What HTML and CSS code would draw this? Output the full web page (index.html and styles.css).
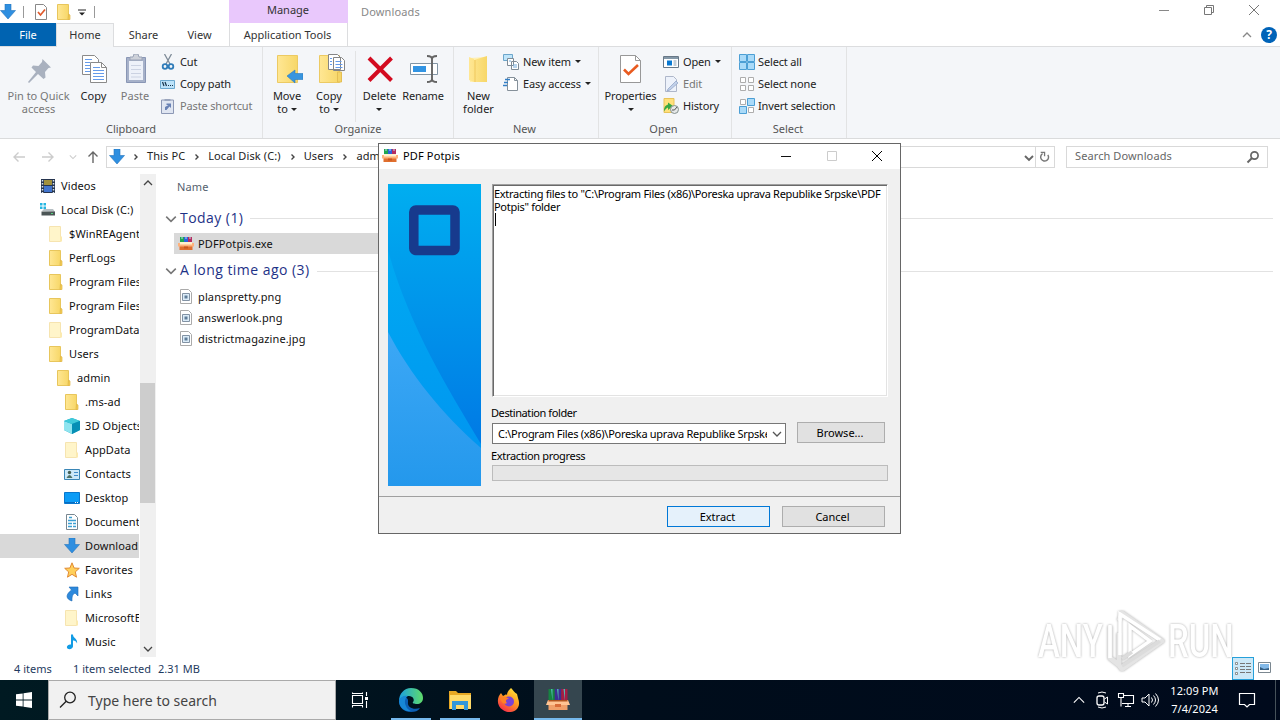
FILE: index.html
```html
<!DOCTYPE html>
<html lang="en">
<head>
  <meta charset="utf-8">
  <title>Downloads</title>
  <link rel="stylesheet" href="styles.css">
</head>
<body>

<svg class="sprites">
  <defs>
    <linearGradient id="gold" x1="0" x2="1"><stop offset="0" stop-color="#ffe794"/><stop offset="1" stop-color="#f7d768"/></linearGradient>
    <linearGradient id="cool" x1="0" y1="0" x2="0" y2="1"><stop offset="0" stop-color="#00aef0"/><stop offset="1" stop-color="#0071e3"/></linearGradient>
    <linearGradient id="cool2" x1="0" y1="0" x2="0" y2="1"><stop offset="0" stop-color="#00aaf2"/><stop offset="1" stop-color="#0092f0"/></linearGradient>
    <linearGradient id="cool3" x1="0" y1="0" x2="0" y2="1"><stop offset="0" stop-color="#3ca8f6"/><stop offset="1" stop-color="#2498ec"/></linearGradient>
    <linearGradient id="edge" x1="0" x2="1"><stop offset="0" stop-color="#1a9fe0"/><stop offset="1" stop-color="#5fdc6a"/></linearGradient>
    <linearGradient id="fire" x1="0.8" y1="0" x2="0.2" y2="1"><stop offset="0" stop-color="#ffe83e"/><stop offset=".45" stop-color="#ff9a1f"/><stop offset="1" stop-color="#f5234f"/></linearGradient>
  </defs>
  <symbol id="down" viewBox="0 0 16 16"><path d="M5 0h6v6.500h4.500L8 15 .5 6.500H5z" fill="#2f8fe0" stroke="#2676bd" stroke-width=".6"/></symbol>
  <symbol id="folder" viewBox="0 0 16 16"><path d="M1.500.5h11v15h-11z" fill="url(#gold)" stroke="#e8c65c"/><path d="M12.500 10l1.500 1v4.500h-2z" fill="#f4cf55" stroke="#e0b548" stroke-width=".7"/></symbol>
  <symbol id="faded" viewBox="0 0 16 16"><path d="M1.500.5h11v15h-11z" fill="#fff5ca" stroke="#f6e4b0"/><path d="M12 10.500h2v5h-2z" fill="#fbeab0"/></symbol>
  <symbol id="check" viewBox="0 0 16 16"><path d="M2.500.5h8l3 3v12h-11z" fill="#fff" stroke="#888"/><path d="M5 8l2.500 3L12 5.500" fill="none" stroke="#e0592b" stroke-width="1.700"/></symbol>
  <symbol id="box" viewBox="0 0 16 16"><path d="M2 1h4v7H2z" fill="#20a650"/><path d="M6 1h4v7H6z" fill="#2d62dc"/><path d="M10 1h4v7h-4z" fill="#b52c60"/><path d="M3 2h2M7 2h2M11 2h2" stroke="#bde"/><path d="M1.500 8h13v6h-13z" fill="#e06f2e"/><path d="M0 7h16v3.500H0z" fill="#ffb27b"/><path d="M2 6h12v2.500H2z" fill="#fff0cc"/><path d="M6 10.500h4v2H6z" fill="#c95820"/></symbol>
  <symbol id="carton" viewBox="0 0 24 24"><path d="M2.500 1h6.300v12H2.500z" fill="#168341"/><path d="M8.800 1h6.400v12H8.800z" fill="#3d2d93"/><path d="M15.200 1h6.300v12h-6.300z" fill="#a51d45"/><path d="M5 1h1.500v12M11 1h1.500v12M17.500 1H19v12" fill="#52b8b0"/><path d="M2.500 14h19v8h-19z" fill="#f0a06a"/><path d="M2 12h20l2 5H0z" fill="#ffc493"/><path d="M2.500 12h19v1.500h-19z" fill="#b0541f"/><path d="M9 16h6v3H9z" fill="#d86c39"/></symbol>
  <symbol id="image" viewBox="0 0 16 16"><path d="M2.500.5h8l3 3v11h-11z" fill="#fff" stroke="#aaa"/><path d="M4.500 4.500h7v7h-7z" fill="#dcecf8" stroke="#8292a4"/><path d="M6.500 6.500h3v3h-3z" fill="#5f7d99"/></symbol>
  <symbol id="pin" viewBox="0 0 32 32"><path d="M19.500 5L28 13.500l-2.500.5-3.500 4 .5 5.500-2 1.500-5.500-5L6 29l-1-1L13 18 8.500 13.500l1.500-2 5.500.5 3.500-4z" fill="#a9b1bf"/></symbol>
  <symbol id="copy" viewBox="0 0 32 32"><g fill="#fff" stroke="#8a8a8a"><path d="M4.500 1.500h12l4 4v15h-16z"/><path d="M12.500 8.500h11l5 5v15h-16z"/><path d="M23.500 8.500v5h5" fill="none"/></g><path d="M7 5.500h7M7 8.500h5M7 11.500h5M7 14.500h5M7 17.500h5M15 13.500h7M15 16.500h11M15 19.500h11M15 22.500h11M15 25.500h11" stroke="#659bea"/></symbol>
  <symbol id="paste" viewBox="0 0 32 32"><path d="M7.500 3.500h19v25h-19z" fill="#a6b1c9" stroke="#8996b5"/><path d="M10 7h14v19H10z" fill="#edf1f9"/><path d="M12 11.500h10M12 15.500h10M12 19.500h10M12 23h10" stroke="#cbd2e2"/><path d="M11 6V3h3l1-3h4l1 3h3v3z" fill="#cdd1d9" stroke="#9aa3b6"/></symbol>
  <symbol id="cut" viewBox="0 0 16 16"><path d="M4.500 0l5.500 10M11.500 0L6 10" stroke="#7e8b98" stroke-width="1.300"/><g fill="none" stroke="#2f7cb9" stroke-width="1.800"><circle cx="5" cy="12.500" r="2.300"/><circle cx="11" cy="12.500" r="2.300"/></g></symbol>
  <symbol id="path" viewBox="0 0 16 16"><path d="M.5 4.500h14v8H.5z" fill="#bde3fa" stroke="#6ca8cf"/><path d="M2.500 6l1.500 4M5 6l1.500 4M8 9.500h1M10 9.500h1M12 9.500h1" stroke="#17344c" fill="none" stroke-width="1.200"/></symbol>
  <symbol id="shortcut" viewBox="0 0 16 16"><path d="M1.500 2h12v13.500h-12z" fill="#dfe5f1" stroke="#8c98b5"/><path d="M4.500 3V1h6v2z" fill="#9aa5bd"/><path d="M5 12V9l3.500-2h-2V5.500H11V10L9.500 8.500l-3 3.500z" fill="#6881b4"/></symbol>
  <symbol id="moveto" viewBox="0 0 32 32"><path d="M6.500 1.500h20v27h-20z" fill="url(#gold)" stroke="#ecca63"/><path d="M16 22l8-6v3.500h8v6h-8V29z" fill="#3895df" stroke="#287bc0" stroke-width=".6"/></symbol>
  <symbol id="copyto" viewBox="0 0 32 32"><path d="M6.500 1.500h20v27h-20z" fill="url(#gold)" stroke="#ecca63"/><path d="M24.500 18h4v10h-4z" fill="#f5d568" stroke="#e4bf55"/><path d="M15.500.5h9l3 3v12h-12zM20.500 3.500h8l3 3v10h-11z" fill="#fff" stroke="#858585"/><path d="M17 4.500h2M17 7.500h2M17 10.500h2M22.500 7.500h6M22.500 10.500h7M22.500 13.500h7" stroke="#659bea"/></symbol>
  <symbol id="delete" viewBox="0 0 32 32"><path d="M5 4l22.500 22.500M27.500 4L5 26.500" stroke="#d30b20" stroke-width="4"/></symbol>
  <symbol id="rename" viewBox="0 0 32 32"><path d="M3.500 9.500h27v11h-27z" fill="#fff" stroke="#8295a5"/><path d="M6 12h13v6H6z" fill="#3294e3"/><path d="M20 2q5 0 5 3v20q0 3-5 3M30 2q-5 0-5 3v20q0 3 5 3" fill="none" stroke="#646464" stroke-width="1.900"/></symbol>
  <symbol id="newfolder" viewBox="0 0 32 32"><path d="M7 4l15-1v25H7z" fill="#fff0b3"/><path d="M6 3l5 2v23l-5-2zM11 6l13-4v26H11z" fill="url(#gold)"/><path d="M12 6v22" stroke="#efc85d"/></symbol>
  <symbol id="newitem" viewBox="0 0 16 16"><path d="M.5.5h9v6h-9z" fill="#bfe5fa" stroke="#6da6cb"/><path d="M4.500 4.500h6v7h-6zM8.500 7.500h5l2 2v6h-7z" fill="#fff" stroke="#7e8b96"/><path d="M10 11h4M10 13h4M6 7h2" stroke="#72aadb"/></symbol>
  <symbol id="easy" viewBox="0 0 16 16"><path d="M4.500 1.500h7l3 3v10h-10z" fill="#fff" stroke="#85909a"/><path d="M11.500 1.500v3h3" fill="none" stroke="#85909a"/><path d="M2 3.500h5M1 6.500h4M0 9.500h4" stroke="#347fc5" stroke-width="1.300"/></symbol>
  <symbol id="props" viewBox="0 0 32 32"><path d="M5.500 1.500h15l5 5v22h-20z" fill="#fff" stroke="#989898"/><path d="M20.500 1.500v5h5" fill="none" stroke="#989898"/><path d="M9 15.500l4.500 4.500L23 11" fill="none" stroke="#e95b20" stroke-width="2.600"/></symbol>
  <symbol id="open" viewBox="0 0 16 16"><path d="M.5 2.500h15v11H.5z" fill="#fff" stroke="#687887"/><path d="M1 3h14v2H1z" fill="#8498a8"/><path d="M4 6.500h5v5H4z" fill="#0878d1"/><path d="M10.500 7h3M10.500 9h3M10.500 11h3" stroke="#849bb0"/></symbol>
  <symbol id="edit" viewBox="0 0 16 16"><path d="M2.500.5h8l3 3v12h-11z" fill="#edf2fb" stroke="#aeb7ca"/><path d="M5 13l8-8 2 2-8 7-3 1z" fill="#c1d0e9" stroke="#8da0c4" stroke-width=".7"/></symbol>
  <symbol id="history" viewBox="0 0 16 16"><path d="M1 .5h10v14H1z" fill="#ffe07b" stroke="#e8c35a"/><path d="M1 13.500c0-4 1-6 4-7v-2l5 3.500-5 4V9.500c-2 1-3 2-4 4z" fill="#38a842"/><circle cx="11.500" cy="11.500" r="4" fill="#e5e8e8" stroke="#85908f"/><path d="M11.500 12l2.500-3M11.500 12H9" stroke="#555"/></symbol>
  <symbol id="selall" viewBox="0 0 16 16"><path d="M.5.5h7v7h-7zM8.500.5h7v7h-7zM.5 8.500h7v7h-7zM8.500 8.500h7v7h-7z" fill="#aadaf8" stroke="#4c9fd5"/></symbol>
  <symbol id="selnone" viewBox="0 0 16 16"><path d="M1.500 1.500h5v5h-5zM9.500 1.500h5v5h-5zM1.500 9.500h5v5h-5zM9.500 9.500h5v5h-5z" fill="#fff" stroke="#adadad"/></symbol>
  <symbol id="selinv" viewBox="0 0 16 16"><path d="M8.500.5h7v7h-7zM.5 8.500h7v7h-7z" fill="#aadaf8" stroke="#4c9fd5"/><path d="M1.500 1.500h5v5h-5zM9.500 9.500h5v5h-5z" fill="#fff" stroke="#adadad"/></symbol>
  <symbol id="videos" viewBox="0 0 16 16"><path d="M1 1h14v14H1z" fill="#26344e"/><path d="M4 2h8v5H4z" fill="#a1913d"/><path d="M4 8h8v6H4z" fill="#4275ce"/><path d="M2.500 2v13M13.500 2v13" stroke="#d7e4f0" stroke-width="1.500" stroke-dasharray="1.500 1.500"/></symbol>
  <symbol id="disk" viewBox="0 0 16 16"><path d="M0 1h2.500v2.500H0zM3.500 1H6v2.500H3.500zM0 4.500h2.500V7H0zM3.500 4.500H6V7H3.500z" fill="#25b6e2"/><path d="M2 9l2-2h9l2 3z" fill="#b6bfc3"/><path d="M1.500 9.500H15v4H1.500z" fill="#4c5656"/><path d="M11 11.500h2" stroke="#54d47d"/></symbol>
  <symbol id="cube" viewBox="0 0 16 16"><path d="M8 0l8 3v9l-8 4-8-4V3z" fill="#13a7c3"/><path d="M0 3l8 3v10l-8-4z" fill="#8fe4ef"/><path d="M0 3l8-3 8 3-8 3z" fill="#40cada"/><path d="M8 6l8-3v9l-8 4z" fill="#078fb5"/></symbol>
  <symbol id="contacts" viewBox="0 0 16 16"><path d="M.5 3.500h15v10H.5z" fill="#cce9f9" stroke="#3a86b6"/><circle cx="5.500" cy="6.500" r="1.700" fill="#435f55"/><path d="M2.500 12q3-6 6 0z" fill="#4e7267"/><path d="M10 6.500h4M10 9.500h4" stroke="#438dca"/></symbol>
  <symbol id="desktop" viewBox="0 0 16 16"><path d="M.5 2.500h15v11H.5z" fill="#0c9cf6" stroke="#0877cd"/><path d="M1 12.500h14" stroke="#086cc0"/><path d="M11 12.500h1M13 12.500h1" stroke="#fff"/></symbol>
  <symbol id="docs" viewBox="0 0 16 16"><path d="M2.500.5h8l3 3v12h-11z" fill="#fff" stroke="#788791"/><path d="M5 3.500h3M4 6.500h8M4 9.500h4M9 9.500h3M4 12.500h4M9 12.500h3" stroke="#3b9fd3" stroke-width="1.400"/></symbol>
  <symbol id="star" viewBox="0 0 16 16"><path d="M8 .8l2.100 5.200 5.200.3-4 3.600 1.200 5.300L8 12.300l-4.500 2.900 1.200-5.300-4-3.600 5.200-.3z" fill="#ffd05b" stroke="#e18a33"/></symbol>
  <symbol id="link" viewBox="0 0 16 16"><path d="M5 1h9v9l-3-3c-3 2-3 4-3 8-6-2-7-6-.5-11z" fill="#2d89dc" stroke="#1d69b6" stroke-width=".6"/></symbol>
  <symbol id="music" viewBox="0 0 16 16"><path d="M7 .5h2c0 4 5 4 4 9-1-3-3-3-4-3v6c-1 4-7 3-6 0 1-2 3-2 4-2z" fill="#129ce5"/></symbol>
  <symbol id="chev-d" viewBox="0 0 10 10"><path d="M1 3l4 4 4-4" fill="none" stroke="currentColor" stroke-width="1.300"/></symbol>
  <symbol id="chev-u" viewBox="0 0 10 10"><path d="M1 7l4-4 4 4" fill="none" stroke="currentColor" stroke-width="1.300"/></symbol>
  <symbol id="chev-r" viewBox="0 0 10 10"><path d="M3.500 2.500L6 5 3.500 7.500" fill="none" stroke="currentColor" stroke-width="1.400"/></symbol>
  <symbol id="arrow" viewBox="0 0 14 14"><path d="M13 7H2M6.500 2.500L2 7l4.500 4.500" fill="none" stroke="currentColor" stroke-width="1.400"/></symbol>
  <symbol id="loupe" viewBox="0 0 14 14"><circle cx="8.500" cy="5.500" r="3.600" fill="none" stroke="currentColor" stroke-width="1.700"/><path d="M6 8L1.500 12.500" stroke="currentColor" stroke-width="2"/></symbol>
  <symbol id="close" viewBox="0 0 12 12"><path d="M1 1l10 10M11 1L1 11" fill="none" stroke="currentColor"/></symbol>
</svg>

<div class="window">
  <header class="titlebar">
    <div class="quick">
      <svg class="ic"><use href="#down"/></svg><i class="bar bar1"></i>
      <svg class="ic check"><use href="#check"/></svg>
      <svg class="ic"><use href="#folder"/></svg>
      <svg class="customize" viewBox="0 0 8 8"><path d="M0 1h8" stroke="#222"/><path d="M1 3.500h6l-3 3z" fill="#222"/></svg><i class="bar"></i>
    </div>
    <div class="manage">Manage</div>
    <div class="caption">Downloads</div>
    <div class="controls">
      <svg viewBox="0 0 12 12"><path d="M1 6.500h10" stroke="#888"/></svg>
      <svg viewBox="0 0 12 12"><path d="M1.500 3.500h7v7h-7zM3.500 3.500v-2h7v7h-2" fill="none" stroke="#777"/></svg>
      <svg viewBox="0 0 12 12"><use href="#close"/></svg>
    </div>
  </header>

  <nav class="tabs">
    <span class="tab file">File</span>
    <span class="tab home">Home</span>
    <span class="tab share">Share</span>
    <span class="tab view">View</span>
    <span class="tab tools">Application Tools</span>
    <span class="tabs-end"><svg class="collapse"><use href="#chev-u"/></svg><b class="help">?</b></span>
  </nav>

  <section class="ribbon">
    <div class="group clipboard">
      <div class="items">
        <div class="big off"><svg><use href="#pin"/></svg><span>Pin to Quick<br>access</span></div>
        <div class="big"><svg><use href="#copy"/></svg><span>Copy</span></div>
        <div class="big off"><svg><use href="#paste"/></svg><span>Paste</span></div>
        <div class="smalls">
          <div class="small"><svg class="ic"><use href="#cut"/></svg>Cut</div>
          <div class="small"><svg class="ic"><use href="#path"/></svg>Copy path</div>
          <div class="small off"><svg class="ic"><use href="#shortcut"/></svg>Paste shortcut</div>
        </div>
      </div>
      <div class="label">Clipboard</div>
    </div>
    <div class="group organize">
      <div class="items">
        <div class="big"><svg><use href="#moveto"/></svg><span>Move<br>to <i class="caret"></i></span></div>
        <div class="big"><svg><use href="#copyto"/></svg><span>Copy<br>to <i class="caret"></i></span></div>
        <div class="big del"><svg><use href="#delete"/></svg><span>Delete<br><i class="caret"></i></span></div>
        <div class="big"><svg><use href="#rename"/></svg><span>Rename</span></div>
      </div>
      <div class="label">Organize</div>
    </div>
    <div class="group new">
      <div class="items">
        <div class="big"><svg><use href="#newfolder"/></svg><span>New<br>folder</span></div>
        <div class="smalls">
          <div class="small"><svg class="ic"><use href="#newitem"/></svg>New item <i class="caret"></i></div>
          <div class="small"><svg class="ic"><use href="#easy"/></svg>Easy access <i class="caret"></i></div>
        </div>
      </div>
      <div class="label">New</div>
    </div>
    <div class="group opens">
      <div class="items">
        <div class="big"><svg><use href="#props"/></svg><span>Properties<br><i class="caret"></i></span></div>
        <div class="smalls">
          <div class="small"><svg class="ic"><use href="#open"/></svg>Open <i class="caret"></i></div>
          <div class="small off"><svg class="ic"><use href="#edit"/></svg>Edit</div>
          <div class="small"><svg class="ic"><use href="#history"/></svg>History</div>
        </div>
      </div>
      <div class="label">Open</div>
    </div>
    <div class="group select">
      <div class="items">
        <div class="smalls">
          <div class="small"><svg class="ic"><use href="#selall"/></svg>Select all</div>
          <div class="small"><svg class="ic"><use href="#selnone"/></svg>Select none</div>
          <div class="small"><svg class="ic"><use href="#selinv"/></svg>Invert selection</div>
        </div>
      </div>
      <div class="label">Select</div>
    </div>
  </section>

  <div class="location">
    <div class="navs">
      <svg><use href="#arrow"/></svg>
      <svg class="fwd"><use href="#arrow"/></svg>
      <svg class="recent"><use href="#chev-d"/></svg>
      <svg class="up"><use href="#arrow"/></svg>
    </div>
    <div class="address">
      <svg class="ic"><use href="#down"/></svg>
      <svg class="sep"><use href="#chev-r"/></svg><span>This PC</span>
      <svg class="sep"><use href="#chev-r"/></svg><span>Local Disk (C:)</span>
      <svg class="sep"><use href="#chev-r"/></svg><span>Users</span>
      <svg class="sep"><use href="#chev-r"/></svg><span>admin</span>
      <svg class="drop" viewBox="0 0 10 10"><path d="M1 3l4 4 4-4" fill="none" stroke="#666" stroke-width="1.900"/></svg>
    </div>
    <div class="refresh"><svg viewBox="0 0 14 14"><path d="M4.200 3.200A4.600 4.600 0 1 0 10.300 4.500" fill="none" stroke="#777" stroke-width="1.700"/><path d="M2 1.500h4.500V6" fill="none" stroke="#777" stroke-width="1.500"/></svg></div>
    <div class="search">Search Downloads<svg><use href="#loupe"/></svg></div>
  </div>

  <main class="content">
    <aside class="tree">
      <div class="row"><svg class="ic"><use href="#videos"/></svg><span>Videos</span></div>
      <div class="row"><svg class="ic"><use href="#disk"/></svg><span>Local Disk (C:)</span></div>
      <div class="row l1"><svg class="ic"><use href="#faded"/></svg><span>$WinREAgent</span></div>
      <div class="row l1"><svg class="ic"><use href="#folder"/></svg><span>PerfLogs</span></div>
      <div class="row l1"><svg class="ic"><use href="#folder"/></svg><span>Program Files</span></div>
      <div class="row l1"><svg class="ic"><use href="#folder"/></svg><span>Program Files</span></div>
      <div class="row l1"><svg class="ic"><use href="#faded"/></svg><span>ProgramData</span></div>
      <div class="row l1"><svg class="ic"><use href="#folder"/></svg><span>Users</span></div>
      <div class="row l2"><svg class="ic"><use href="#folder"/></svg><span>admin</span></div>
      <div class="row l3"><svg class="ic"><use href="#folder"/></svg><span>.ms-ad</span></div>
      <div class="row l3"><svg class="ic"><use href="#cube"/></svg><span>3D Objects</span></div>
      <div class="row l3"><svg class="ic"><use href="#faded"/></svg><span>AppData</span></div>
      <div class="row l3"><svg class="ic"><use href="#contacts"/></svg><span>Contacts</span></div>
      <div class="row l3"><svg class="ic"><use href="#desktop"/></svg><span>Desktop</span></div>
      <div class="row l3"><svg class="ic"><use href="#docs"/></svg><span>Document</span></div>
      <div class="row l3 current"><svg class="ic"><use href="#down"/></svg><span>Download</span></div>
      <div class="row l3"><svg class="ic"><use href="#star"/></svg><span>Favorites</span></div>
      <div class="row l3"><svg class="ic"><use href="#link"/></svg><span>Links</span></div>
      <div class="row l3"><svg class="ic"><use href="#faded"/></svg><span>MicrosoftE</span></div>
      <div class="row l3"><svg class="ic"><use href="#music"/></svg><span>Music</span></div>
    </aside>
    <div class="scrollbar">
      <svg><use href="#chev-u"/></svg>
      <i class="thumb"></i>
      <svg class="bottom"><use href="#chev-d"/></svg>
    </div>
    <section class="list">
      <div class="colhead">Name</div>
      <div class="heading"><svg><use href="#chev-d"/></svg><span>Today (1)</span><i></i></div>
      <div class="entry picked"><svg class="ic"><use href="#box"/></svg>PDFPotpis.exe</div>
      <div class="heading second"><svg><use href="#chev-d"/></svg><span>A long time ago (3)</span><i></i></div>
      <div class="entry"><svg class="ic"><use href="#image"/></svg>planspretty.png</div>
      <div class="entry"><svg class="ic"><use href="#image"/></svg>answerlook.png</div>
      <div class="entry"><svg class="ic"><use href="#image"/></svg>districtmagazine.jpg</div>
    </section>
  </main>

  <footer class="status">
    <span class="count">4 items</span><span class="chosen">1 item selected</span><span>2.31 MB</span>
    <div class="modes">
      <span class="mode on"><svg viewBox="0 0 18 18"><path d="M1.500 3.500h2v2h-2zM1.500 8.500h2v2h-2zM1.500 13.500h2v2h-2z" fill="#fff" stroke="#777" stroke-width=".8"/><path d="M6 4.500h5M12 4.500h5M6 7.500h5M12 7.500h5M6 10.500h5M12 10.500h5M6 13.500h5M12 13.500h5" stroke="#777"/></svg></span>
      <span class="mode"><svg viewBox="0 0 18 18"><path d="M2.500 3.500h12v10h-12z" fill="#fff" stroke="#7b8790"/><path d="M4 5h9v6H4z" fill="#83b9e8"/><path d="M4 11V8l4 2 5-1v2z" fill="#365f83"/></svg></span>
    </div>
  </footer>
</div>

<div class="dialog">
  <div class="dlg-title">
    <svg class="ic"><use href="#box"/></svg><span>PDF Potpis</span>
    <div class="dlg-controls">
      <svg viewBox="0 0 12 12"><path d="M1 6.500h10" stroke="#111"/></svg>
      <svg viewBox="0 0 12 12"><path d="M1.500 1.500h9v9h-9z" fill="none" stroke="#ccc"/></svg>
      <svg viewBox="0 0 12 12"><use href="#close"/></svg>
    </div>
  </div>
  <div class="dlg-main">
    <svg class="banner" viewBox="0 0 93 302">
      <path d="M0 0h93v302H0z" fill="url(#cool)"/>
      <path d="M0 66C20 140 60 205 93 260v42H0z" fill="url(#cool2)"/>
      <path d="M0 148C22 190 54 230 93 264v38H0z" fill="url(#cool3)"/>
      <rect x="25.800" y="26" width="41.200" height="40.500" rx="2" fill="none" stroke="#173a8d" stroke-width="9.500" stroke-linejoin="round"/>
    </svg>
    <div class="form">
      <div class="log">Extracting files to "C:\Program Files (x86)\Poreska uprava Republike Srpske\PDF<br>Potpis" folder<i class="cursor"></i></div>
      <label class="dest">Destination folder</label>
      <div class="picker">
        <div class="combo"><span>C:\Program Files (x86)\Poreska uprava Republike Srpske</span><svg><use href="#chev-d"/></svg></div>
        <button class="btn browse">Browse...</button>
      </div>
      <label class="prog-label">Extraction progress</label>
      <div class="progress"></div>
    </div>
  </div>
  <div class="dlg-foot">
    <button class="btn primary">Extract</button>
    <button class="btn">Cancel</button>
  </div>
</div>

<div class="watermark">
  <span>ANY</span>
  <svg viewBox="0 0 60 60"><path d="M4 15v32l9 7V22M13 10l3-8 40 28-40 28-3-4" fill="none" stroke="#e4e4e4" stroke-width="5" stroke-linejoin="round"/><path d="M4 47V14M14 44V3l40 26M24 15v29l20-14z" fill="none" stroke="#fff" stroke-width="3.500"/><path d="M16 55l38-25M16 48l10-7" stroke="#dcdcdc" stroke-width="3.500"/></svg>
  <span>RUN</span>
</div>

<div class="taskbar">
  <div class="start"><svg viewBox="0 0 16 16"><path d="M0 2.300l6.700-.9v6.200H0zM7.500 1.300L16 .1v7.500H7.500zM0 8.400h6.700v6.200L0 13.700zM7.500 8.400H16v7.500l-8.500-1.200z" fill="#fff"/></svg></div>
  <div class="task-search"><svg viewBox="0 0 18 18"><circle cx="11" cy="6.500" r="5.300" fill="none" stroke="#222" stroke-width="1.300"/><path d="M7.200 10.300L1 16.500" stroke="#222" stroke-width="1.300"/></svg>Type here to search</div>
  <div class="taskview"><svg viewBox="0 0 18 18"><path d="M1.500 4.500h10v8h-10zM1.500 2.500v-1M11.500 2.500v-1M1 2.500h11M1 14.500h11M1.500 14.500v2M11.500 14.500v2M15.500 1v4M15.500 10v7" fill="none" stroke="#fff" stroke-width="1.100"/><path d="M14 6h3v3h-3z" fill="#fff"/></svg></div>
  <div class="app running"><svg viewBox="0 0 24 24"><path d="M0 12c0 8 5 12 12 12 4 0 7-1 9-4-6 2-13 0-12-6 1-5-6-7-9-2z" fill="#0c5fb5"/><path d="M0 13C0 6 5 0 12 0c8 0 12 5 12 10 0 4-3 6-6 6s-5-1-4-2c2-2 0-6-4-6-5 0-9 2-10 5z" fill="url(#edge)"/><path d="M0 13c1-4 5-6 9-5-3 2-4 6-2 10 1 3 3 4 5 5C5 24 0 19 0 13z" fill="#1787d6"/></svg></div>
  <div class="app running"><svg viewBox="0 0 24 24"><path d="M1 3h7l2 2h13v16H1z" fill="#e7a824"/><path d="M2 7h21v14H2z" fill="#ffda69"/><path d="M4 13h16v9h-4v-5H8v5H4z" fill="#3197da"/></svg></div>
  <div class="app"><svg viewBox="0 0 24 24"><path d="M14 0c3 3 3 4 6 6l1 4c5 13-9 17-15 12C-1 18 0 9 4 5l2 3c2-1 3-2 4-1 0-3 2-5 4-7z" fill="url(#fire)"/><circle cx="12" cy="13.500" r="5" fill="#7a42d5"/><path d="M3 10c4-2 7-1 9 1-3 0-4 2-2 4-2 2-6 0-7-5z" fill="#ff8126"/></svg></div>
  <div class="app running active"><svg><use href="#carton"/></svg></div>
  <div class="tray">
    <svg class="tray-up" viewBox="0 0 14 14"><path d="M1 10l6-6 6 6" fill="none" stroke="#fff" stroke-width="1.300"/></svg>
    <svg viewBox="0 0 18 18"><rect x="4" y="5" width="7" height="9" rx="2" fill="none" stroke="#fff" stroke-width="1.300"/><path d="M11.500 8l3-2v7l-3-2M5 2q4-2 8 0M5 16q4 2 8 0" fill="none" stroke="#fff"/></svg>
    <svg viewBox="0 0 18 18"><path d="M6 4.500h10.500v8H5M11 12.500v3M8 15.500h6M1.500 2.500h5v4h-5zM4 6.500v9" fill="none" stroke="#fff" stroke-width="1.100"/></svg>
    <svg viewBox="0 0 18 18"><path d="M1 7h3l4-4v12l-4-4H1zM10.500 6.500q2 2.500 0 5M12.500 4.500q4 4.500 0 9M14.500 2.500q6 6.500 0 13" fill="none" stroke="#fff"/></svg>
  </div>
  <div class="clock">12:09 PM<br>7/4/2024</div>
  <div class="notice"><svg viewBox="0 0 18 18"><path d="M1.500 2.500h15v11h-5L9 16l-2.500-2.500h-5z" fill="none" stroke="#fff" stroke-width="1.200"/></svg></div>
  <i class="peek"></i>
</div>

</body>
</html>
```
FILE: styles.css
```css
* { box-sizing: border-box; }
body { margin: 0; width: 1280px; height: 720px; overflow: hidden; background: #fff; color: #111; font: 11px/13px "Noto Sans", "Open Sans", sans-serif; position: relative; }
svg { display: block; flex: none; }
.sprites { position: absolute; width: 0; height: 0; }
.ic { width: 16px; height: 16px; }
i { font-style: normal; }

.window { height: 680px; display: flex; flex-direction: column; }
.titlebar { height: 23px; display: flex; flex: none; }
.quick { width: 229px; display: flex; align-items: center; }
.bar { width: 1px; height: 12px; background: #999; margin-left: 8px; }
.bar1 { margin-left: 7px; }
.quick .check { margin: 0 7px 0 9px; }
.customize { width: 8px; height: 8px; margin: 2px 0 0 6px; }
.manage { width: 119px; background: #e9c8fc; text-align: center; padding: 3px 1px 0 0; color: #333; }
.caption { padding: 5px 0 0 13px; color: #888; letter-spacing: .15px; flex: 1; }
.controls { display: flex; gap: 33px; padding: 4px 19px 0 0; color: #777; }
.controls svg { width: 12px; height: 12px; position: relative; left: -1px; }

.tabs { height: 24px; flex: none; display: flex; border-bottom: 1px solid #dcdddf; line-height: 23px; color: #333; }
.tab { text-align: center; }
.file { width: 56px; background: #0063b1; color: #fff; }
.home { width: 58px; height: 24px; line-height: 21px; background: #f5f6f7; border: 1px solid #dcdddf; border-bottom: 0; }
.share { width: 58px; padding-left: 1px; }
.view { width: 57px; padding-right: 2px; }
.tools { width: 119px; border: solid #dcdddf; border-width: 0 1px; padding-right: 2px; }
.tabs-end { margin-left: auto; display: flex; align-items: center; padding-right: 3px; gap: 9px; color: #888; }
.collapse { width: 10px; height: 10px; }
.help { width: 16px; height: 16px; border-radius: 50%; background: #0063b8; color: #fff; line-height: 16px; text-align: center; font-size: 12px; }

.ribbon { height: 92px; flex: none; display: flex; background: #f4f6f9; border-bottom: 1px solid #dadbdc; color: #222; }
.group { border-right: 1px solid #e2e3e4; display: flex; flex-direction: column; }
.items { height: 75px; display: flex; padding-top: 4px; }
.label { text-align: center; color: #555; }
.big { text-align: center; padding-top: 3px; white-space: nowrap; display: flex; flex-direction: column; align-items: center; }
.big svg { width: 32px; height: 32px; margin-bottom: 3px; }
.small { height: 22px; display: flex; align-items: center; gap: 4px; white-space: nowrap; padding-bottom: 2px; letter-spacing: -.15px; }
.small .ic { position: relative; top: 1px; }
.off { color: #777; }
.caret { display: inline-block; width: 0; height: 0; border: 3px solid transparent; border-top-color: #222; border-bottom: 0; vertical-align: 2px; }
.clipboard { width: 263px; }
.clipboard .big:nth-child(1) { width: 77px; }
.clipboard .big:nth-child(2) { width: 33px; }
.clipboard .big:nth-child(3) { width: 50px; }
.organize { width: 191px; }
.organize .big:nth-child(1) { width: 48px; }
.organize .big:nth-child(2) { width: 36px; }
.organize .del { width: 48px; margin-left: 8px; border-left: 1px solid #e2e3e4; }
.organize .big:nth-child(4) { width: 40px; letter-spacing: -.2px; }
.new { width: 145px; }
.new .label { padding-right: 3px; }
.new .big { width: 49px; }
.opens { width: 133px; }
.opens .big { width: 64px; padding-right: 1px; letter-spacing: -.15px; }
.opens .label { padding-right: 3px; }
.select { width: 115px; }
.select .label { padding-right: 2px; }
.select .smalls { padding-left: 7px; }
.select .small { gap: 3px; }

.location { height: 35px; flex: none; display: flex; align-items: center; color: #222; }
.navs { width: 106px; display: flex; align-items: center; padding-left: 12px; color: #ccc; }
.navs svg { width: 14px; height: 14px; }
.navs .fwd { margin-left: 15px; transform: scaleX(-1); }
.navs .recent { width: 8px; height: 8px; margin-left: 14px; }
.navs .up { margin-left: 9px; color: #666; transform: rotate(90deg); }
.address { width: 930px; height: 22px; display: flex; align-items: center; border: 1px solid #d9d9d9; padding-left: 2px; letter-spacing: .1px; }
.address span { padding-bottom: 2px; }
.address .sep { width: 10px; height: 10px; margin: 0 6px; color: #444; }
.address span + .sep { margin: 0 6px 0 7px; }
.drop { width: 10px; height: 10px; margin: 2px 1px 0 auto; }
.refresh { width: 19px; height: 22px; border: 1px solid #d9d9d9; border-left: 0; display: flex; align-items: center; justify-content: center; }
.refresh svg { width: 12px; height: 12px; }
.search { width: 202px; height: 22px; margin-left: 11px; padding: 0 7px 2px 8px; border: 1px solid #d9d9d9; color: #666; letter-spacing: .1px; display: flex; align-items: center; justify-content: space-between; }
.search svg { width: 14px; height: 14px; margin-top: 2px; }

.content { height: 483px; flex: none; display: flex; }
.tree { width: 139px; overflow: hidden; letter-spacing: .1px; }
.row { height: 24px; display: flex; align-items: center; gap: 5px; padding-left: 40px; white-space: nowrap; }
.row span { padding-bottom: 2px; }
.l1, .l2, .l3 { gap: 5px; }
.l1 { padding-left: 48px; }
.l2 { padding-left: 56px; }
.l3 { padding-left: 64px; }
.current { background: #d9d9d9; }
.scrollbar { width: 16px; margin-left: 1px; background: #f0f0f0; display: flex; flex-direction: column; align-items: center; color: #444; }
.scrollbar svg { width: 10px; height: 10px; margin: 4px 1px 0 0; }
.thumb { width: 15px; height: 120px; margin: 195px 1px 0 0; background: #cdcdcd; }
.scrollbar .bottom { margin: auto 1px 3px 0; }
.list { flex: 1; padding: 0 7px 0 10px; letter-spacing: .12px; }
.colhead { height: 30px; padding: 6px 0 0 11px; color: #555f6e; }
.heading { height: 29px; display: flex; align-items: center; padding-bottom: 1px; color: #1e3287; font: 300 14px/16px "Open Sans", "Noto Sans", sans-serif; letter-spacing: .45px; }
.heading svg { width: 12px; height: 12px; color: #777; margin: 1px 3px 0 -1px; }
.heading span { font-weight: 400; padding-bottom: 1px; }
.heading i { flex: 1; height: 1px; background: #e2e2e2; margin: 1px 0 0 7px; }
.second { height: 32px; padding-top: 1px; padding-bottom: 0; }
.entry { height: 21px; display: flex; align-items: center; gap: 4px; padding-left: 12px; }
.picked { width: 500px; margin-left: 8px; padding-left: 4px; background: #d9d9d9; }

.status { height: 23px; display: flex; align-items: center; padding-left: 14px; color: #1e3a60; }
.count { width: 59px; }
.chosen { width: 85px; }
.modes { margin-left: auto; display: flex; }
.mode { width: 26px; height: 23px; padding: 2px; }
.mode svg { width: 18px; height: 18px; }
.on { width: 22px; padding: 1px; background: #cce8f7; border: 1px solid #26a0da; }

.dialog { position: absolute; left: 378px; top: 143px; width: 523px; height: 391px; background: #f0f0f0; border: 1px solid #666; display: flex; flex-direction: column; color: #000; }
.dlg-title { height: 25px; background: #fff; display: flex; align-items: center; padding: 0 17px 0 3px; gap: 5px; letter-spacing: .15px; }
.dlg-title > span { padding-bottom: 2px; }
.dlg-title .ic { margin-top: -1px; }
.dlg-controls { margin-left: auto; display: flex; gap: 33.5px; position: relative; top: -.5px; }
.dlg-controls svg { width: 12px; height: 12px; }
.dlg-main { height: 328px; display: flex; padding: 15px 12px 0 9px; border-bottom: 1px solid #a0a0a0; letter-spacing: -.29px; }
.banner { width: 93px; height: 302px; }
.form { margin-left: 11px; width: 396px; }
.log { height: 213px; background: #fff; border: 1px solid; border-color: #a0a0a0 #fff #fff #a0a0a0; box-shadow: inset 1px 1px #696969, inset -1px -1px #e3e3e3; padding: 2px 0 0 1px; white-space: nowrap; }
.cursor { display: block; width: 1px; height: 13px; background: #000; margin-left: 1px; }
.form label { display: block; margin-left: -1px; }
.form .dest { margin-top: 9px; letter-spacing: -.42px; }
.picker { display: flex; gap: 11px; margin-top: 3px; }
.combo { width: 294px; height: 21px; margin-top: 1px; border: 1px solid #777; background: #fff; display: flex; align-items: center; padding: 0 3px 0 5px; }
.combo span { width: 269px; overflow: hidden; white-space: nowrap; margin-right: 5px; padding-bottom: 1px; }
.combo svg { width: 10px; height: 10px; color: #555; }
.btn { font: inherit; color: #000; width: 103px; height: 21px; padding: 0 2px 0 0; background: #e1e1e1; border: 1px solid #adadad; }
.browse { width: 88px; }
.form .prog-label { margin-top: 5px; letter-spacing: -.32px; }
.progress { height: 16px; margin-top: 3px; background: #e6e6e6; border: 1px solid #bcbcbc; }
.dlg-foot { display: flex; justify-content: flex-end; gap: 12px; padding: 9px 15px 0; }
.primary { background: #e5f1fb; border-color: #0078d7; }

.watermark { position: absolute; left: 1038px; top: 610px; display: flex; align-items: center; height: 62px; color: #fff; filter: drop-shadow(0 0 1px #aaa); }
.watermark span { width: 65px; font: 500 47px/62px Roboto, sans-serif; transform: scaleX(.7); transform-origin: 0 50%; }
.watermark svg { width: 60px; height: 60px; margin: 0 2px 0 3px; }

.taskbar { height: 40px; display: flex; background: linear-gradient(90deg, #001a22, #000d1b 50%, #000a1c); color: #fff; }
.start, .taskview, .app { width: 48px; display: flex; align-items: center; justify-content: center; }
.start svg { width: 16px; height: 16px; }
.task-search { width: 288px; background: #f1f1f1; border: 1px solid #aaa; display: flex; align-items: center; gap: 11px; padding-left: 10px; color: #444; font-size: 14px; }
.task-search svg { width: 18px; height: 18px; }
.taskview svg { width: 18px; height: 18px; }
.app { width: 49px; position: relative; padding-right: 2px; }
.taskview + .app { margin-left: 3px; }
.app svg { width: 24px; height: 24px; }
.running::after { content: ""; position: absolute; left: 4px; right: 5px; bottom: 0; height: 2px; background: #76b9ed; }
.active { width: 48px; padding: 0; background: #35464f; }
.active::after { left: 0; right: 0; }
.tray { margin-left: auto; display: flex; align-items: center; gap: 6px; }
.tray svg { width: 18px; height: 18px; }
.tray .tray-up { width: 12px; height: 12px; margin-right: 2px; }
.clock { width: 71px; text-align: center; line-height: 18px; padding-top: 2px; letter-spacing: .1px; }
.notice { width: 45px; display: flex; align-items: center; padding-left: 8px; }
.notice svg { width: 18px; height: 18px; }
.peek { width: 5px; border-left: 1px solid #46525a; }
```
